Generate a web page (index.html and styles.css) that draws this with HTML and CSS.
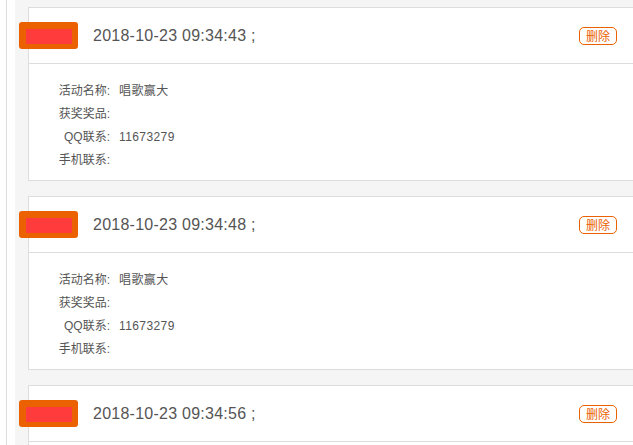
FILE: index.html
```html
<!DOCTYPE html>
<html>
  <head>
    <title>中奖记录</title>
    <link rel="stylesheet" href="styles.css">
  </head>
  <body>
    <div class="page">
      <div class="list">
        <div class="card">
          <span class="badge"><span class="badge-mask"></span></span>
          <div class="card-head">
            <span class="time">2018-10-23 09:34:43 ;</span>
            <button class="del-btn">删除</button>
          </div>
          <div class="card-body">
            <div class="row"><span class="label">活动名称:</span><span class="value">唱歌赢大</span></div>
            <div class="row"><span class="label">获奖奖品:</span><span class="value"></span></div>
            <div class="row"><span class="label">QQ联系:</span><span class="value">11673279</span></div>
            <div class="row"><span class="label">手机联系:</span><span class="value"></span></div>
          </div>
        </div>
        <div class="card">
          <span class="badge"><span class="badge-mask"></span></span>
          <div class="card-head">
            <span class="time">2018-10-23 09:34:48 ;</span>
            <button class="del-btn">删除</button>
          </div>
          <div class="card-body">
            <div class="row"><span class="label">活动名称:</span><span class="value">唱歌赢大</span></div>
            <div class="row"><span class="label">获奖奖品:</span><span class="value"></span></div>
            <div class="row"><span class="label">QQ联系:</span><span class="value">11673279</span></div>
            <div class="row"><span class="label">手机联系:</span><span class="value"></span></div>
          </div>
        </div>
        <div class="card">
          <span class="badge"><span class="badge-mask"></span></span>
          <div class="card-head">
            <span class="time">2018-10-23 09:34:56 ;</span>
            <button class="del-btn">删除</button>
          </div>
          <div class="card-body">
            <div class="row"><span class="label">活动名称:</span><span class="value">唱歌赢大</span></div>
            <div class="row"><span class="label">获奖奖品:</span><span class="value"></span></div>
            <div class="row"><span class="label">QQ联系:</span><span class="value">11673279</span></div>
            <div class="row"><span class="label">手机联系:</span><span class="value"></span></div>
          </div>
        </div>
      </div>
    </div>
  </body>
</html>
```

FILE: styles.css
```css
html, body {
  margin: 0;
  overflow: hidden;
  background-color: #fff;
  font-family: "Liberation Sans", "Noto Sans CJK SC", sans-serif;
  color: #555;
}

.page {
  margin-left: 6px;
  border-left: 1px solid #ddd;
  padding-left: 8px;
  height: 100vh;
}

.list {
  background-color: #f5f5f5;
  padding: 7px 0 0 13px;
  height: 100%;
  overflow: hidden;
}

.card {
  position: relative;
  background-color: #fff;
  border: 1px solid #ddd;
  margin-right: -20px;
  margin-bottom: 15px;
}

.badge {
  position: absolute;
  left: -10px;
  top: 14px;
  width: 59px;
  height: 27px;
  box-sizing: border-box;
  padding: 7px 6px 5px 7px;
  background-color: #eb6100;
  border-radius: 3px;
}

.badge-mask {
  display: block;
  height: 100%;
  background-color: #ff3b3b;
}

.card-head {
  display: flex;
  align-items: center;
  justify-content: space-between;
  height: 55px;
  padding: 0 35px 0 64px;
  border-bottom: 1px solid #ddd;
}

.time {
  font-size: 16px;
  letter-spacing: 0.25px;
  color: #555;
}

.del-btn {
  font-family: "Noto Sans CJK SC", sans-serif;
  font-size: 12px;
  line-height: 16px;
  height: 18px;
  padding: 0 6px;
  color: #eb6100;
  background-color: #fff;
  border: 1px solid #eb6100;
  border-radius: 5px;
  cursor: pointer;
}

.card-body {
  padding: 16px 0 8px 28px;
  font-size: 12px;
}

.row {
  display: flex;
  line-height: 23px;
  height: 23px;
}

.label {
  width: 53px;
  text-align: right;
  margin-right: 9px;
}

.value {
  letter-spacing: 0.4px;
}
```
